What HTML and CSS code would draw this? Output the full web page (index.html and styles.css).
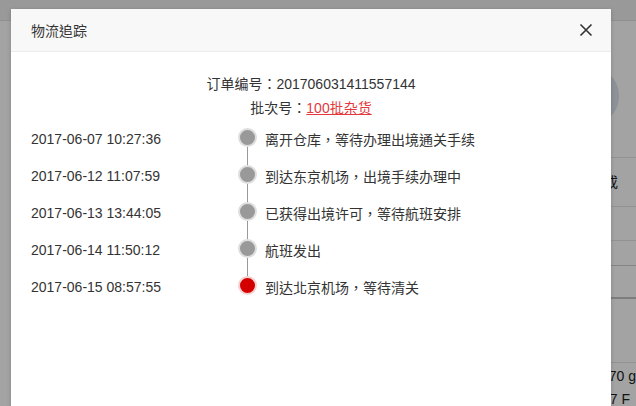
FILE: index.html
```html
<!DOCTYPE html>
<html lang="zh-TW">
<head>
    <meta charset="UTF-8">
    <meta name="viewport" content="width=device-width, initial-scale=1.0">
    <title>物流追踪</title>
    <link rel="stylesheet" href="styles.css">
</head>
<body>
    <div class="page">
        <div class="page-top"></div>
        <div class="page-main">
            <div class="page-left"></div>
            <div class="page-right">
                <div class="avatar"></div>
                <div class="row r1"></div>
                <div class="row r2">或</div>
                <div class="row r3"></div>
                <div class="row r4"></div>
                <div class="row r5"></div>
                <div class="row r6"></div>
                <div class="row r7">070 g</div>
                <div class="row r8">77 F</div>
            </div>
        </div>
    </div>
    <div class="mask"></div>

    <div class="dialog">
        <div class="dialog-head">
            <span class="dialog-title">物流追踪</span>
            <button type="button" class="dialog-close">
                <svg width="14" height="14" viewBox="0 0 14 14">
                    <path d="M1.5 1.5 L12.5 12.5 M12.5 1.5 L1.5 12.5" stroke="#333" stroke-width="1.6" fill="none"/>
                </svg>
            </button>
        </div>
        <div class="dialog-body">
            <p class="info">订单编号：201706031411557144</p>
            <p class="info">批次号：<a href="#">100批杂货</a></p>
            <ul class="track">
                <li class="step">
                    <span class="time">2017-06-07 10:27:36</span>
                    <span class="dot"></span>
                    <span class="desc">离开仓库，等待办理出境通关手续</span>
                </li>
                <li class="step">
                    <span class="time">2017-06-12 11:07:59</span>
                    <span class="dot"></span>
                    <span class="desc">到达东京机场，出境手续办理中</span>
                </li>
                <li class="step">
                    <span class="time">2017-06-13 13:44:05</span>
                    <span class="dot"></span>
                    <span class="desc">已获得出境许可，等待航班安排</span>
                </li>
                <li class="step">
                    <span class="time">2017-06-14 11:50:12</span>
                    <span class="dot"></span>
                    <span class="desc">航班发出</span>
                </li>
                <li class="step current">
                    <span class="time">2017-06-15 08:57:55</span>
                    <span class="dot"></span>
                    <span class="desc">到达北京机场，等待清关</span>
                </li>
            </ul>
        </div>
    </div>
</body>
</html>
```

FILE: styles.css
```css
body {
    margin: 0;
    width: 636px;
    height: 406px;
    overflow: hidden;
    position: relative;
    font-family: "Liberation Sans", "Noto Sans CJK TC", sans-serif;
    font-size: 14px;
    color: #333;
    background-color: #fff;
}

/* page behind the dialog */
.page-top {
    height: 20px;
    background-color: #f0f0f0;
    border-bottom: 1px solid #e2e2e2;
}
.page-main {
    display: flex;
}
.page-left {
    width: 600px;
}
.page-right {
    flex: 1;
    font-size: 14px;
    color: #222;
    white-space: nowrap;
}
.avatar {
    width: 36px;
    height: 48px;
    margin: 51px 0 0 -10px;
    border-radius: 50%;
    background-color: #dde5ef;
}
.row {
    border-bottom: 1px solid #e4e4e4;
    padding-left: 6px;
    box-sizing: border-box;
}
.r1 { height: 38px; }
.r2 { height: 49px; line-height: 49px; padding-left: 11px; }
.r3 { height: 34px; }
.r4 { height: 25px; border-bottom-color: #d0d0d0; }
.r5 { height: 33px; border-bottom: 2px solid #c4c4c4; }
.r6 { height: 64px; }
.r7 { height: 24px; line-height: 26px; border: none; padding-left: 8px; }
.r8 { height: 24px; line-height: 24px; border: none; padding-left: 9px; }

.mask {
    position: absolute;
    inset: 0;
    background-color: rgba(0, 0, 0, 0.36);
}

/* dialog */
.dialog {
    position: absolute;
    left: 11px;
    top: 9px;
    width: 600px;
    height: 420px;
    background-color: #fff;
    box-shadow: 0 1px 4px rgba(0, 0, 0, 0.2);
}
.dialog-head {
    height: 42px;
    display: flex;
    align-items: center;
    justify-content: space-between;
    padding: 0 18px 0 20px;
    background-color: #f8f8f8;
    border-bottom: 1px solid #ececec;
}
.dialog-title {
    font-size: 14px;
    color: #333;
}
.dialog-close {
    border: none;
    background: none;
    padding: 0;
    width: 14px;
    height: 14px;
    cursor: pointer;
    display: block;
}
.dialog-body {
    padding: 20px 20px 0;
}
.info {
    margin: 0;
    line-height: 24px;
    text-align: center;
}
.info a {
    color: #e4393c;
    text-decoration: underline;
}
.track {
    list-style: none;
    margin: 0;
    padding: 0;
}
.step {
    display: grid;
    grid-template-columns: 199px 19px 1fr;
    column-gap: 8px;
    align-items: center;
    height: 37px;
}
.dot {
    position: relative;
    width: 15px;
    height: 15px;
    border-radius: 50%;
    background-color: #999;
    border: 2px solid #dedede;
    margin-top: -2px;
}
.step:not(:last-child) .dot::after {
    content: "";
    position: absolute;
    left: 7px;
    top: 17px;
    width: 1px;
    height: 20px;
    background-color: #999;
}
.current .dot {
    background-color: #d40000;
    border-color: #f4d2d2;
}
```
